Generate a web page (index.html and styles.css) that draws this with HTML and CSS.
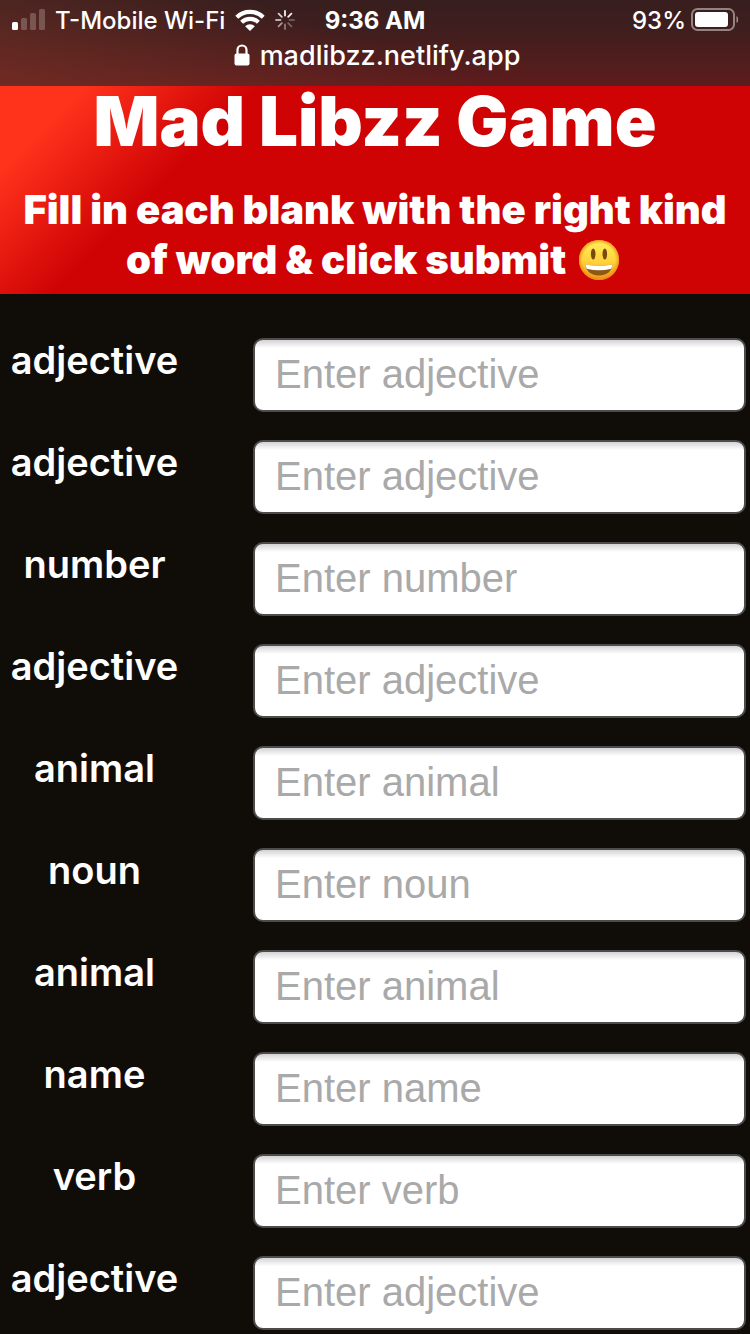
FILE: index.html
```html
<!DOCTYPE html>
<html lang="en">
<head>
<meta charset="utf-8">
<meta name="viewport" content="width=device-width, initial-scale=1">
<title>Mad Libzz Game</title>
<link rel="stylesheet" href="styles.css">
</head>
<body>
<div class="chrome">
  <div class="status">
    <div class="status-left">
      <svg class="signal" width="33" height="22" viewBox="0 0 33 22" fill="#fff" aria-hidden="true">
        <rect x="0" y="13" width="6" height="8" rx="1.5"/>
        <g opacity=".22"><rect x="9" y="9" width="6" height="12" rx="1.5"/><rect x="18" y="4" width="6" height="17" rx="1.5"/><rect x="27" y="0" width="6" height="21" rx="1.5"/></g>
      </svg>
      <span class="carrier">T-Mobile Wi-Fi</span>
      <svg class="wifi" width="30" height="22" viewBox="0 0 30 22" aria-hidden="true">
        <g fill="none" stroke="#fff" stroke-width="4.2"><path d="M1.8 8.2a19 19 0 0 1 26.4 0"/><path d="M6.6 13.2a12.2 12.2 0 0 1 16.8 0"/></g>
        <path d="M10.1 17.2a7.2 7.2 0 0 1 9.8 0L15 22z" fill="#fff"/>
      </svg>
      <svg class="spinner" width="20" height="20" viewBox="-10 -10 20 20" stroke="#fff" stroke-width="1.8" stroke-linecap="round" aria-hidden="true">
        <path d="M0-4.5V-9" opacity=".95"/><path d="M3.2-3.2 6.4-6.4" opacity=".95"/><path d="M4.5 0H9" opacity=".25"/><path d="M3.2 3.2 6.4 6.4" opacity=".3"/><path d="M0 4.5V9" opacity=".4"/><path d="M-3.2 3.2-6.4 6.4" opacity=".55"/><path d="M-4.5 0H-9" opacity=".65"/><path d="M-3.2-3.2-6.4-6.4" opacity=".8"/>
      </svg>
    </div>
    <span class="time">9:36 AM</span>
    <div class="status-right">
      <span>93%</span>
      <svg width="48" height="24" viewBox="0 0 48 24" aria-hidden="true">
        <rect x="2" y="1" width="42" height="21" rx="5.5" fill="none" stroke="#fff" stroke-width="2" opacity=".45"/>
        <rect x="5" y="4" width="33" height="15" rx="3" fill="#fff"/>
        <path d="M46.5 8a4.2 4.2 0 0 1 0 7z" fill="#fff" opacity=".5"/>
      </svg>
    </div>
  </div>
  <div class="address">
    <svg width="16" height="22" viewBox="0 0 16 22" aria-hidden="true">
      <rect x="0.5" y="9.5" width="15" height="12" rx="2" fill="#fff"/>
      <path d="M3.5 10V6a4.5 4.5 0 0 1 9 0v4" fill="none" stroke="#fff" stroke-width="2.2"/>
    </svg>
    <span>madlibzz.netlify.app</span>
  </div>
</div>
<header class="hero">
  <h1 class="title">Mad Libzz Game</h1>
  <h2 class="lead">Fill in each blank with the right kind of word &amp; click submit
    <svg class="smile" viewBox="0 0 40 40" role="img" aria-label="smiling face">
      <defs>
        <linearGradient id="face" x1="0" y1="0" x2="0" y2="1"><stop offset="0" stop-color="#fff05e"/><stop offset=".55" stop-color="#ffd23a"/><stop offset="1" stop-color="#f4901e"/></linearGradient>
        <radialGradient id="rim"><stop offset=".8" stop-color="#f09a10" stop-opacity="0"/><stop offset="1" stop-color="#ea850c" stop-opacity=".75"/></radialGradient>
      </defs>
      <circle cx="20" cy="20" r="20" fill="url(#face)"/><circle cx="20" cy="20" r="20" fill="url(#rim)"/>
      <ellipse cx="14.2" cy="14" rx="2.3" ry="5.6" fill="#7a4a0c"/><ellipse cx="25.8" cy="14" rx="2.3" ry="5.6" fill="#7a4a0c"/>
      <path d="M6.5 24.5Q20 27 33.5 24.5C33 31.5 27.5 35.5 20 35.5S7 31.5 6.5 24.5z" fill="#8a5a12"/>
      <path d="M6.5 24.5Q20 27 33.5 24.5C33.3 27 32.5 28.5 31.5 29Q20 31.5 8.5 29C7.5 28.5 6.7 27 6.5 24.5z" fill="#fff"/>
    </svg></h2>
</header>
<form class="words">
  <label for="w1">adjective</label><input id="w1" type="text" placeholder="Enter adjective">
  <label for="w2">adjective</label><input id="w2" type="text" placeholder="Enter adjective">
  <label for="w3">number</label><input id="w3" type="text" placeholder="Enter number">
  <label for="w4">adjective</label><input id="w4" type="text" placeholder="Enter adjective">
  <label for="w5">animal</label><input id="w5" type="text" placeholder="Enter animal">
  <label for="w6">noun</label><input id="w6" type="text" placeholder="Enter noun">
  <label for="w7">animal</label><input id="w7" type="text" placeholder="Enter animal">
  <label for="w8">name</label><input id="w8" type="text" placeholder="Enter name">
  <label for="w9">verb</label><input id="w9" type="text" placeholder="Enter verb">
  <label for="w10">adjective</label><input id="w10" type="text" placeholder="Enter adjective">
</form>
</body>
</html>
```

FILE: styles.css
```css
* { box-sizing: border-box; }
body {
  margin: 0;
  background: #100d09;
  color: #fff;
  font-family: Inter, "Liberation Sans", sans-serif;
}
.chrome {
  padding: 5px 12px 11px;
  background:
    linear-gradient(20deg, rgba(124, 52, 38, .6), rgba(112, 44, 34, 0) 50%),
    linear-gradient(#381e1e, #3e1e1e 30%, #5e1c1d);
}
.status {
  display: grid;
  grid-template-columns: 1fr auto 1fr;
  align-items: center;
  height: 30px;
  font-size: 24px;
  font-weight: 500;
}
.status-left, .status-right { display: flex; align-items: center; }
.status-left { gap: 10px; }
.status-right { justify-content: flex-end; gap: 4px; }
.time { font-weight: 700; }
.address {
  display: flex;
  align-items: center;
  justify-content: center;
  gap: 10px;
  height: 40px;
  padding-left: 4px;
  font-size: 27px;
  font-weight: 500;
}
.hero {
  padding: 0 12px 9px;
  text-align: center;
  background: linear-gradient(135deg, #ff321c 9%, #cf0304 27%);
}
.title {
  margin: 0;
  padding-bottom: 29px;
  font-size: 69px;
  line-height: 70px;
  font-weight: 900;
}
.lead {
  margin: 0;
  font-size: 40px;
  line-height: 50px;
  font-weight: 900;
}
.smile {
  width: 40px;
  height: 40px;
  margin: 0 5px;
  vertical-align: -6px;
}
.words {
  display: grid;
  grid-template-columns: 189px 1fr;
  column-gap: 64px;
  row-gap: 28px;
  padding: 44px 4px 4px 0;
}
.words label {
  text-align: center;
  font-size: 38px;
  line-height: 44px;
  font-weight: 600;
}
.words input {
  width: 100%;
  height: 74px;
  padding: 0 20px 2px;
  border: 2px solid #4c4c4c;
  border-radius: 10px;
  background: linear-gradient(#d4d2d4, #fff 8px);
  color: #000;
  font: 40px "Liberation Sans", Arial, sans-serif;
}
.words input::placeholder { color: #a9a9a9; opacity: 1; }
```
